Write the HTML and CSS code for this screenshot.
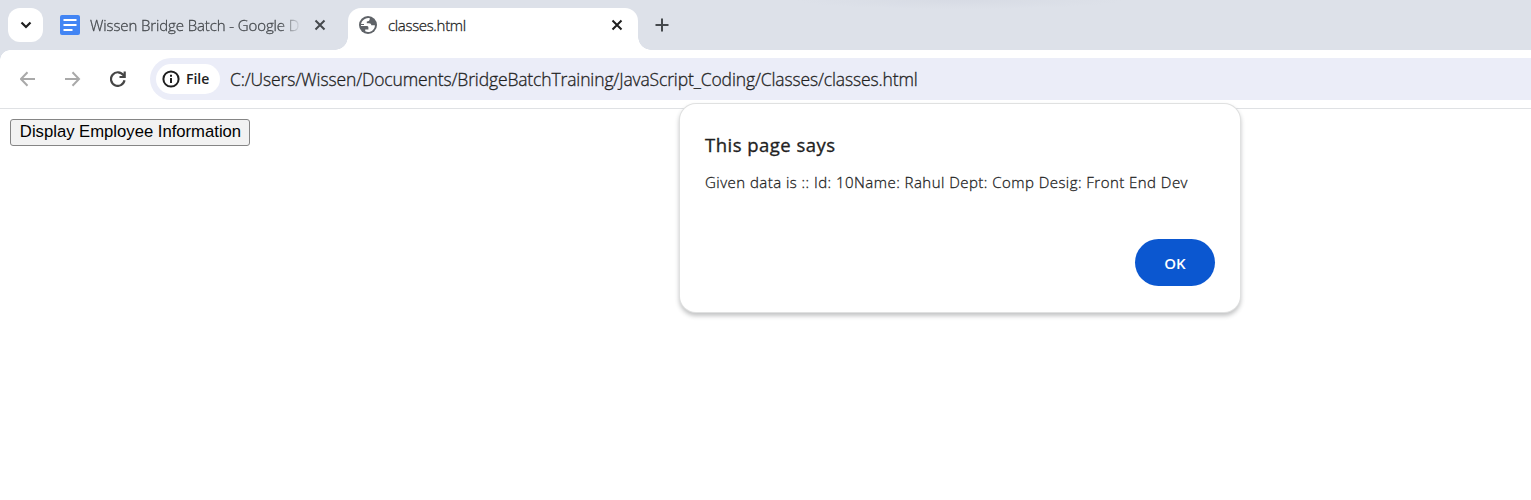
FILE: index.html
```html
<!DOCTYPE html>
<html lang="en">
<head>
<meta charset="utf-8">
<title>classes.html</title>
<link rel="stylesheet" href="styles.css">
</head>
<body>
<header class="tabstrip">
  <button class="tab-search" aria-label="Search tabs"><svg width="12" height="8" viewBox="0 0 12 8"><path d="M1.500 1.500 6 6l4.500-4.500" fill="none" stroke="#1f1f1f" stroke-width="2.200"/></svg></button>
  <div class="tab">
    <svg class="favicon" width="20" height="20" viewBox="0 0 20 20"><rect width="20" height="20" rx="2" fill="#4285f4"/><path d="M3.500 5h13M3.500 10h13M3.500 15h9" stroke="#fff" stroke-width="2.200"/></svg>
    <span class="tab-title tab-title-fade">Wissen Bridge Batch - Google D</span>
    <svg class="close" width="12" height="12" viewBox="0 0 12 12"><path d="m1.500 1.500 9 9m0-9-9 9" stroke="#45494d" stroke-width="2"/></svg>
  </div>
  <div class="tab tab-active">
    <svg class="favicon" width="20" height="20" viewBox="0 0 20 20"><circle cx="10" cy="10" r="9" fill="#5f6368"/><path d="M11.800 3.200C11.800 5.500 10.800 6.200 8.800 6.400V8.300H11C12.500 8.300 13.300 9.100 13.300 10.200H16.900C16.900 14 14 17 10 17c-1 0-2-.3-2.800-.7V14.500H10.400V12.500C10.400 11.500 9.700 11 8.700 11H3C2.500 6.500 6.800 2.300 11.800 3.200Z" fill="#fff"/><path d="M3 9.500H6" stroke="#5f6368" stroke-width="1"/></svg>
    <span class="tab-title">classes.html</span>
    <svg class="close" width="12" height="12" viewBox="0 0 12 12"><path d="m1.500 1.500 9 9m0-9-9 9" stroke="#1f1f1f" stroke-width="2"/></svg>
  </div>
  <svg class="new-tab" width="14" height="14" viewBox="0 0 14 14"><path d="M7 .5v13M.5 7h13" stroke="#45494d" stroke-width="2"/></svg>
</header>
<nav class="toolbar">
  <svg class="nav-icon" width="16" height="16" viewBox="0 0 16 16"><path d="M15 8H1.500M7.500 1.300 1 8 7.500 14.700" fill="none" stroke="#a9a9a9" stroke-width="2"/></svg>
  <svg class="nav-icon" width="16" height="16" viewBox="0 0 16 16"><path d="M0 8H13.500M7.500 1.300 14 8 7.500 14.700" fill="none" stroke="#a9a9a9" stroke-width="2"/></svg>
  <svg class="nav-icon" width="16" height="16" viewBox="0 0 16 16"><path d="M14.500 9.300A6.800 6.800 0 1 1 13.400 4.200L14.500 5.800M14.700 .5V6H9.500" fill="none" stroke="#454545" stroke-width="2.200"/></svg>
  <div class="omnibox">
    <div class="file-chip">
      <svg width="18" height="18" viewBox="0 0 18 18"><circle cx="9" cy="9" r="7.600" fill="none" stroke="#1f1f1f" stroke-width="2"/><path d="M9 8v5M9 4.800v2" stroke="#1f1f1f" stroke-width="2"/></svg>
      <span class="chip-label">File</span>
    </div>
    <span class="url">C:/Users/Wissen/Documents/BridgeBatchTraining/JavaScript_Coding/Classes/classes.html</span>
  </div>
</nav>
<main class="page">
  <button class="page-button">Display Employee Information</button>
</main>
<section class="dialog" role="dialog">
  <h1 class="dialog-title">This page says</h1>
  <p class="dialog-message">Given data is :: Id: 10Name: Rahul Dept: Comp Desig: Front End Dev</p>
  <button class="dialog-ok">OK</button>
</section>
</body>
</html>
```
FILE: styles.css
```css
* { box-sizing: border-box; }
body {
  margin: 0;
  height: 500px;
  overflow: hidden;
  background: #fff;
  color: #1f1f1f;
  font-family: "Open Sans", "Noto Sans", sans-serif;
}
button { font-family: inherit; border: 0; padding: 0; }
svg { flex: none; display: block; }
.tabstrip {
  display: flex;
  height: 50px;
  background: radial-gradient(ellipse 165px 9px at 960px 0, #d7dbe4, #dde1e9 100%) #dde1e9;
}
.tab-search {
  display: flex;
  align-items: center;
  justify-content: center;
  width: 35px;
  height: 34px;
  margin: 8px 0 0 8px;
  border-radius: 12px;
  background: #fff;
}
.tab {
  display: flex;
  align-items: center;
  width: 290px;
  height: 42px;
  margin-top: 8px;
  padding: 0 15px 8px 10px;
}
.tab:not(.tab-active) { margin-left: 7px; }
.tab:not(.tab-active) .close { margin-right: 6px; }
.tab-active {
  position: relative;
  margin-left: 8px;
  border-radius: 13px 13px 0 0;
  background: #fff;
}
.tab-active::before, .tab-active::after {
  content: "";
  position: absolute;
  bottom: 0;
  width: 13px;
  height: 13px;
}
.tab-active::before { right: 100%; background: radial-gradient(circle at 0 0, transparent 12.500px, #fff 13px); }
.tab-active::after { left: 100%; background: radial-gradient(circle at 100% 0, transparent 12.500px, #fff 13px); }
.tab-title, .url, .dialog-message {
  font-weight: 300;
  -webkit-text-stroke: 0.3px currentColor;
  white-space: nowrap;
}
.tab-title {
  flex: 1;
  margin-left: 10px;
  font-size: 15px;
  line-height: 20px;
  letter-spacing: -0.33px;
}
.tab-title-fade {
  flex: 0 0 211px;
  margin-right: 13px;
  color: #45494d;
  letter-spacing: -0.11px;
  -webkit-mask-image: linear-gradient(90deg, #000 190px, transparent 211px);
  mask-image: linear-gradient(90deg, #000 190px, transparent 211px);
}
.new-tab { margin: 18px 0 0 17px; }
.toolbar {
  display: flex;
  align-items: center;
  height: 59px;
  padding-left: 20px;
  gap: 29px;
  border-bottom: 1px solid #dfe1e4;
  background: radial-gradient(circle at 10px 10px, #fff 9.500px, #dde1e9 10px) 0 0 / 10px 10px no-repeat #fff;
}
.omnibox {
  display: flex;
  align-items: center;
  flex: 1;
  height: 42px;
  margin-left: -5px;
  padding-left: 6px;
  border-radius: 21px 0 0 21px;
  background: #ebedf8;
}
.file-chip {
  display: flex;
  align-items: center;
  width: 64px;
  height: 30px;
  padding: 0 0 1px 6px;
  gap: 6px;
  border-radius: 15px;
  background: #fff;
}
.chip-label { font-size: 14px; font-weight: 600; }
.url { margin-left: 10px; font-size: 17.500px; letter-spacing: -0.13px; }
.page { padding: 10px; }
.page-button {
  display: block;
  width: 240px;
  height: 27px;
  padding: 0 0 2px 1px;
  border: 1px solid #858585;
  border-radius: 3px;
  background: #f2f2f2;
  color: #000;
  font: 16.667px "Liberation Sans", Arial, sans-serif;
  white-space: nowrap;
}
.dialog {
  position: absolute;
  top: 104px;
  left: 680px;
  width: 560px;
  height: 208px;
  padding: 27px 25px 26px;
  display: flex;
  flex-direction: column;
  border-radius: 16px;
  background: #fff;
  box-shadow: 0 0 0 1px #e0e1e1, 0 3px 4px 1px rgba(60, 64, 67, .3);
}
.dialog-title { margin: 0; font-size: 18.500px; font-weight: 400; line-height: 28px; letter-spacing: 0.48px; -webkit-text-stroke: 0.35px currentColor; }
.dialog-message { margin: 12px 0 0; font-size: 15px; line-height: 22px; letter-spacing: 0.46px; }
.dialog-ok {
  align-self: flex-end;
  width: 80px;
  height: 47px;
  margin-top: auto;
  border-radius: 24px;
  background: #0b57d0;
  color: #fff;
  font-size: 15px;
  font-weight: 600;
}
```
